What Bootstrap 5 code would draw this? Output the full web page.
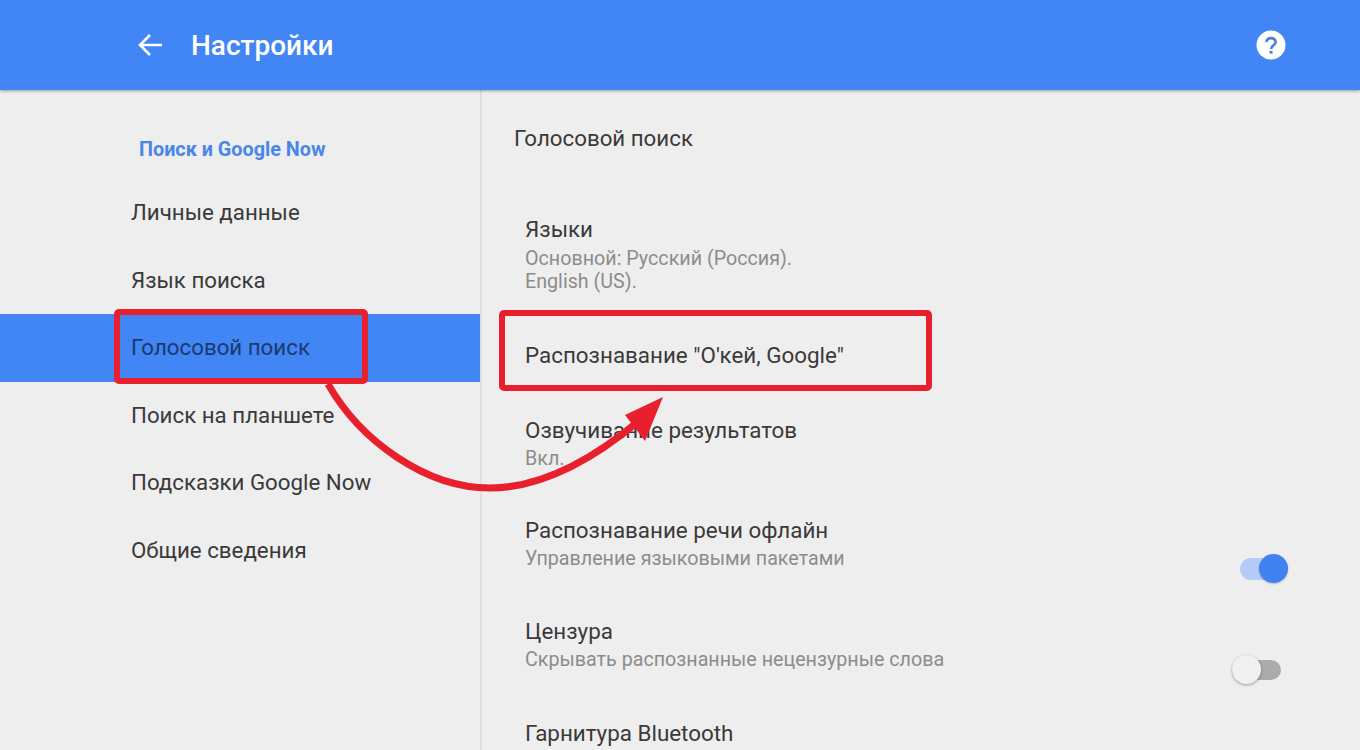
<!DOCTYPE html>
<html lang="ru">
<head>
    <meta charset="UTF-8">
    <meta name="viewport" content="width=device-width, initial-scale=1.0">
    <title>Настройки</title>
    <link rel="stylesheet" href="https://cdn.jsdelivr.net/npm/bootstrap@5.3.0/dist/css/bootstrap.min.css">
    <style>
        html, body {
            height: 100%;
        }
        body {
            font-family: Roboto, "Liberation Sans", sans-serif;
            background-color: #eeeeee;
            color: #3a3a3a;
            overflow: hidden;
            position: relative;
        }
        .app-bar {
            height: 90px;
            background-color: #4285f4;
            color: #fff;
            padding: 0 74px 0 137px;
            box-shadow: 0 1px 3px rgba(0, 0, 0, 0.35);
            position: relative;
            z-index: 1;
        }
        .app-title {
            font-size: 28px;
            font-weight: 500;
            line-height: 34px;
            margin: 2px 0 0 28px;
        }
        .side-col {
            width: 482px;
            height: 660px;
            flex: none;
            border-right: 2px solid #e0e0e0;
            padding-top: 48px;
        }
        .side-head {
            font-size: 19.8px;
            font-weight: 700;
            line-height: 24px;
            color: #4a86e8;
            padding-left: 139px;
            margin-bottom: 17px;
        }
        .side-col .nav-link {
            height: 67.5px;
            line-height: 67.5px;
            padding: 0 0 0 131px;
            font-size: 22.3px;
            color: #3a3a3a;
            width: 480px;
        }
        .side-col .nav-link.active {
            background-color: #4285f4;
            color: #1b3a6e;
        }
        .main-col {
            padding: 34px 72px 0 32px;
        }
        .main-head {
            font-size: 22.3px;
            line-height: 28px;
            margin-bottom: 63px;
        }
        .set-list {
            padding-left: 11px;
            row-gap: 46.5px;
        }
        .set-title {
            font-size: 22.4px;
            line-height: 28px;
        }
        .set-sub {
            font-size: 19.7px;
            line-height: 23px;
            margin-top: 3px;
            color: #8c8c8c;
        }
        .first-row {
            padding-bottom: 1.5px;
        }
        .first-row .set-sub {
            margin-top: 4px;
        }
        .last-row {
            margin-top: 1.5px;
        }
        .sw {
            width: 48px;
            height: 22px;
            border-radius: 11px;
            background-color: #b4cbf7;
            position: relative;
            flex: none;
            margin: 42px 0 -10px;
        }
        .sw::after {
            content: "";
            position: absolute;
            top: -4px;
            right: 0;
            width: 29px;
            height: 29px;
            border-radius: 50%;
            background-color: #3f82f0;
            box-shadow: 0 1px 2px rgba(0, 0, 0, 0.2);
        }
        .sw-off {
            background-color: #ababab;
            height: 20px;
            width: 49px;
            margin: 43px 7px -9px 0;
        }
        .sw-off::after {
            top: -5px;
            right: auto;
            left: 0;
            background-color: #f0f0f0;
            box-shadow: 0 1px 3px rgba(0, 0, 0, 0.35);
        }
        .mark-layer {
            position: absolute;
            top: 0;
            left: 0;
            z-index: 2;
            pointer-events: none;
        }
    </style>
</head>
<body>
    <!-- Top bar -->
    <header class="app-bar d-flex align-items-center">
        <svg width="26" height="26" viewBox="0 0 26 26" fill="none" stroke="#fff" stroke-width="2.6">
            <path d="M25 13H3M13 3L3 13l10 10"/>
        </svg>
        <h1 class="app-title">Настройки</h1>
        <svg class="ms-auto" width="30" height="30" viewBox="0 0 30 30">
            <circle cx="15" cy="15" r="14.5" fill="#fff"/>
            <path d="M10.3 12a4.8 4.8 0 0 1 9.4 0c0 3.2-4.4 3.4-4.6 7" fill="none" stroke="#4a80d8" stroke-width="2.6"/>
            <rect x="13.6" y="20.8" width="2.9" height="2.9" fill="#4a80d8"/>
        </svg>
    </header>

    <div class="d-flex">
        <!-- Sidebar -->
        <aside class="side-col">
            <div class="side-head">Поиск и Google Now</div>
            <nav class="nav flex-column">
                <a class="nav-link" href="#">Личные данные</a>
                <a class="nav-link" href="#">Язык поиска</a>
                <a class="nav-link active" href="#">Голосовой поиск</a>
                <a class="nav-link" href="#">Поиск на планшете</a>
                <a class="nav-link" href="#">Подсказки Google Now</a>
                <a class="nav-link" href="#">Общие сведения</a>
            </nav>
        </aside>

        <!-- Settings -->
        <main class="main-col flex-grow-1">
            <div class="main-head">Голосовой поиск</div>
            <div class="set-list d-flex flex-column">
                <div class="first-row">
                    <div class="set-title">Языки</div>
                    <div class="set-sub">Основной: Русский (Россия).<br>English (US).</div>
                </div>
                <div class="set-title">Распознавание "О'кей, Google"</div>
                <div>
                    <div class="set-title">Озвучивание результатов</div>
                    <div class="set-sub">Вкл.</div>
                </div>
                <div class="d-flex justify-content-between">
                    <div>
                        <div class="set-title">Распознавание речи офлайн</div>
                        <div class="set-sub">Управление языковыми пакетами</div>
                    </div>
                    <span class="sw"></span>
                </div>
                <div class="d-flex justify-content-between">
                    <div>
                        <div class="set-title">Цензура</div>
                        <div class="set-sub">Скрывать распознанные нецензурные слова</div>
                    </div>
                    <span class="sw sw-off"></span>
                </div>
                <div class="set-title last-row">Гарнитура Bluetooth</div>
            </div>
        </main>
    </div>

    <!-- Red annotation drawn over the screen -->
    <svg class="mark-layer" width="1360" height="750" viewBox="0 0 1360 750" fill="none">
        <rect x="117" y="312" width="248" height="69" rx="2" stroke="#e8202e" stroke-width="6"/>
        <rect x="502" y="313" width="427" height="75" rx="2" stroke="#e8202e" stroke-width="6"/>
        <path d="M328 384C360 440 425 488 490 488C540 488 590 462 640 420" stroke="#e8202e" stroke-width="7"/>
        <polygon points="663,397 625,415 645,441" fill="#e8202e"/>
    </svg>

    <script src="https://cdn.jsdelivr.net/npm/bootstrap@5.3.0/dist/js/bootstrap.bundle.min.js"></script>
</body>
</html>
